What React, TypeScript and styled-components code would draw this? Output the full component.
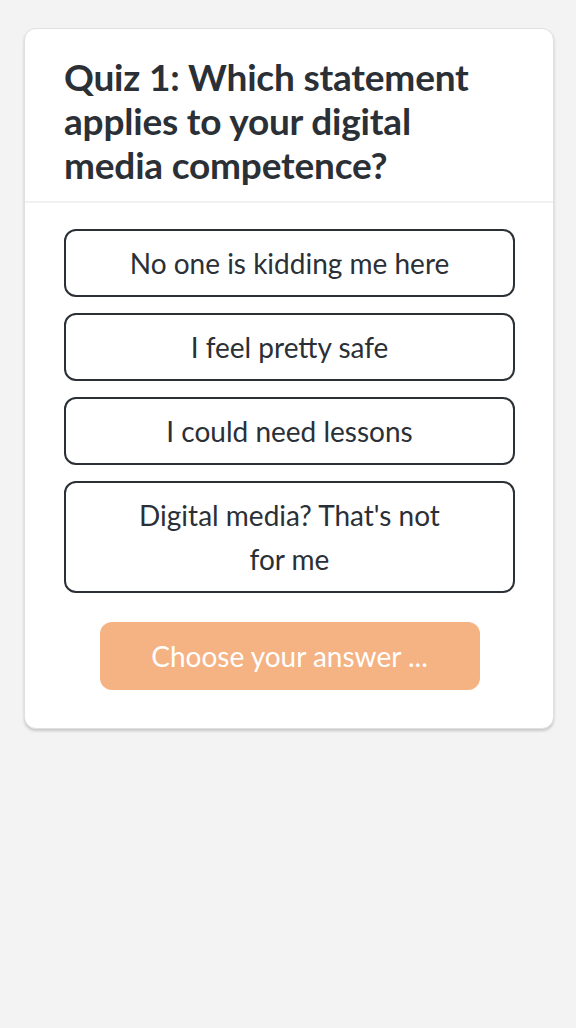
import styled, { createGlobalStyle } from 'styled-components'

const OPTIONS = [
  'No one is kidding me here',
  'I feel pretty safe',
  'I could need lessons',
  "Digital media? That's not for me"
]

const GlobalStyle = createGlobalStyle`
  html, body {
    margin: 0;
    padding: 0;
    background: #f3f3f3;
  }
  body {
    font-family: Lato, "Noto Sans", sans-serif;
  }
`

const App = () => {
  return (
    <Page>
      <GlobalStyle />
      <Card>
        <Header>
          <Title>Quiz 1: Which statement applies to your digital media competence?</Title>
        </Header>
        <Body>
          <OptionList>
            {OPTIONS.map((text) => (
              <Option key={text}>{text}</Option>
            ))}
          </OptionList>
          <SubmitButton disabled>Choose your answer ...</SubmitButton>
        </Body>
      </Card>
    </Page>
  )
}

const Page = styled.div`
  padding: 28px 22px 40px 24px;
`

const Card = styled.div`
  background: #fff;
  border: 1px solid #e0e0e0;
  border-radius: 12px;
  box-shadow: 0 2px 3px rgba(0, 0, 0, 0.18);
  overflow: hidden;
`

const Header = styled.div`
  padding: 26px 60px 14px 39px;
  border-bottom: 2px solid #f1f1f1;
`

const Title = styled.h1`
  margin: 0;
  font-size: 37px;
  line-height: 44px;
  font-weight: 700;
  color: #2b3036;
  letter-spacing: -0.2px;
`

const Body = styled.div`
  display: flex;
  flex-direction: column;
  align-items: center;
  padding: 26px 38px 38px 39px;
`

const OptionList = styled.div`
  display: flex;
  flex-direction: column;
  gap: 16px;
  width: 100%;
`

const Option = styled.button`
  font-family: inherit;
  font-size: 28px;
  line-height: 44px;
  color: #2b3036;
  background: #fff;
  border: 2px solid #2b3036;
  border-radius: 12px;
  padding: 10px 60px;
  text-align: center;
  cursor: pointer;
`

const SubmitButton = styled.button`
  margin-top: 29px;
  width: 380px;
  height: 68px;
  border: none;
  border-radius: 12px;
  background: #f5b282;
  color: #fff;
  font-family: inherit;
  font-size: 28px;
`

export default App
